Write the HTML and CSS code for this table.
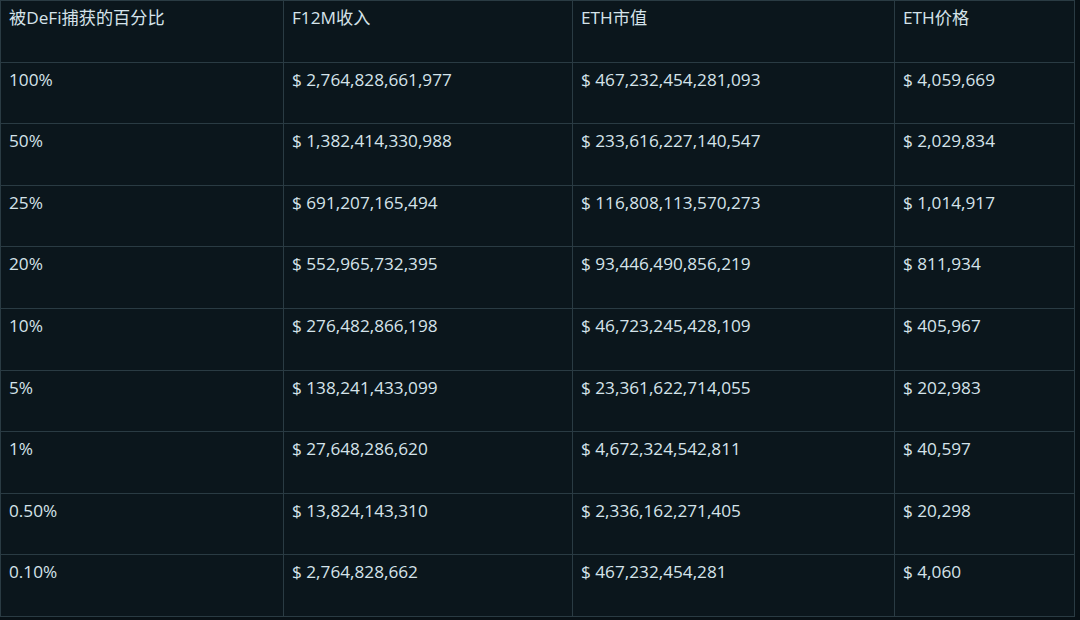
FILE: index.html
```html
<!DOCTYPE html>
<html lang="zh">
<head>
<meta charset="utf-8">
<link rel="stylesheet" href="styles.css">
</head>
<body>
<table class="grid">
  <colgroup>
    <col class="c1"><col class="c2"><col class="c3"><col class="c4">
  </colgroup>
  <tr><td>被DeFi捕获的百分比</td><td>F12M收入</td><td>ETH市值</td><td>ETH价格</td></tr>
  <tr><td>100%</td><td>$ 2,764,828,661,977</td><td>$ 467,232,454,281,093</td><td>$ 4,059,669</td></tr>
  <tr><td>50%</td><td>$ 1,382,414,330,988</td><td>$ 233,616,227,140,547</td><td>$ 2,029,834</td></tr>
  <tr><td>25%</td><td>$ 691,207,165,494</td><td>$ 116,808,113,570,273</td><td>$ 1,014,917</td></tr>
  <tr><td>20%</td><td>$ 552,965,732,395</td><td>$ 93,446,490,856,219</td><td>$ 811,934</td></tr>
  <tr><td>10%</td><td>$ 276,482,866,198</td><td>$ 46,723,245,428,109</td><td>$ 405,967</td></tr>
  <tr><td>5%</td><td>$ 138,241,433,099</td><td>$ 23,361,622,714,055</td><td>$ 202,983</td></tr>
  <tr><td>1%</td><td>$ 27,648,286,620</td><td>$ 4,672,324,542,811</td><td>$ 40,597</td></tr>
  <tr><td>0.50%</td><td>$ 13,824,143,310</td><td>$ 2,336,162,271,405</td><td>$ 20,298</td></tr>
  <tr><td>0.10%</td><td>$ 2,764,828,662</td><td>$ 467,232,454,281</td><td>$ 4,060</td></tr>
</table>
</body>
</html>
```

FILE: styles.css
```css
html, body {
  margin: 0;
  padding: 0;
  background: #081116;
}
body {
  font-family: "Open Sans", "Noto Sans CJK SC", sans-serif;
  font-size: 17.2px;
  color: #d5e3ea;
}
.grid {
  border-collapse: collapse;
  width: 1074px;
  table-layout: fixed;
  background: #0b161c;
}
.c1 { width: 283px; }
.c2 { width: 289px; }
.c3 { width: 322px; }
.c4 { width: 180px; }
.grid td {
  border: 1px solid #2a3b43;
  height: 61.6px;
  box-sizing: border-box;
  vertical-align: top;
  padding: 6px 8px 0 8px;
  line-height: 22px;
  white-space: nowrap;
}
```
